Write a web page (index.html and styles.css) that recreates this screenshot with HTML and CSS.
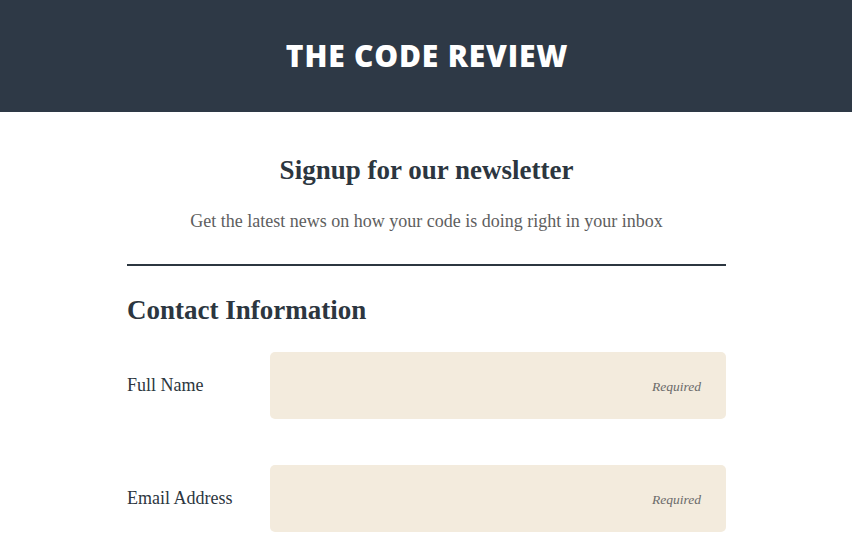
FILE: index.html
```html
<!DOCTYPE html>
<html>
<head>
<meta charset="utf-8">
<link rel="stylesheet" href="styles.css">
</head>
<body>
<header class="masthead">
  <h1 class="brand">THE CODE REVIEW</h1>
</header>
<main class="container">
  <section class="intro">
    <h2 class="intro-title">Signup for our newsletter</h2>
    <p class="intro-text">Get the latest news on how your code is doing right in your inbox</p>
  </section>
  <hr class="divider">
  <h3 class="section-title">Contact Information</h3>
  <form class="form">
    <div class="row">
      <label class="label">Full Name</label>
      <div class="field"><span class="req">Required</span></div>
    </div>
    <div class="row">
      <label class="label">Email Address</label>
      <div class="field"><span class="req">Required</span></div>
    </div>
  </form>
</main>
</body>
</html>
```
FILE: styles.css
```css
html, body { margin: 0; padding: 0; background: #fff; }
body { font-family: "Liberation Serif", "Times New Roman", serif; color: #2c3640; }
.masthead {
  background: #2e3946;
  height: 112px;
  display: flex;
  align-items: center;
  justify-content: center;
}
.brand {
  margin: 0;
  color: #fff;
  font-family: "Open Sans", sans-serif;
  font-weight: 800;
  font-size: 30px;
  letter-spacing: 0.8px;
  padding-bottom: 2px;
  padding-left: 2px;
}
.container { width: 599px; margin: 0 auto; padding-left: 1px; }
.intro { text-align: center; padding-top: 40px; }
.intro-title { margin: 0; font-size: 27px; font-weight: bold; line-height: 36px; color: #2c3640; }
.intro-text { margin: 22px 0 0; font-size: 18px; line-height: 22px; color: #5e5e5e; }
.divider { border: 0; border-top: 2px solid #2c3640; margin: 32px 0 0; }
.section-title { margin: 26px 0 0; font-size: 27px; font-weight: bold; line-height: 36px; }
.form { margin-top: 24px; display: flex; flex-direction: column; gap: 46px; }
.row { display: flex; align-items: center; }
.label { width: 143px; font-size: 18px; color: #2c3640; }
.field {
  width: 456px;
  height: 67px;
  background: #f3ebdd;
  border-radius: 5px;
  display: flex;
  align-items: center;
  justify-content: flex-end;
  padding-right: 25px;
  box-sizing: border-box;
}
.req { font-style: italic; font-size: 13.5px; color: #6a6a6a; padding-top: 2px; }
```
